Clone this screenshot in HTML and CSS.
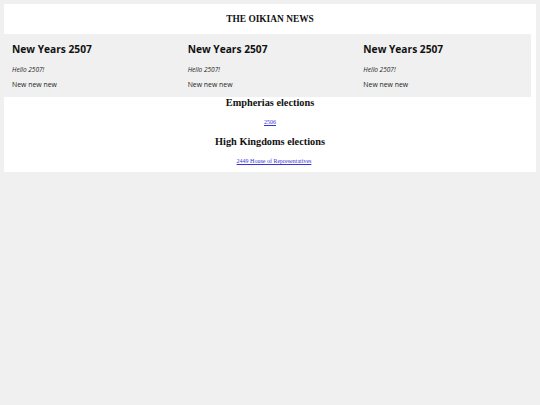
FILE: index.html
```html
<!DOCTYPE html>
<html lang="en">
<head>
<meta charset="utf-8">
<title>The Oikian News</title>
<link rel="stylesheet" href="styles.css">
</head>
<body>
<div class="page">
  <header class="masthead">
    <h1 class="masthead-title">THE OIKIAN NEWS</h1>
  </header>
  <section class="news-band">
    <article class="news-item">
      <h2 class="news-title">New Years 2507</h2>
      <p class="news-lead">Hello 2507!</p>
      <p class="news-body">New new new</p>
    </article>
    <article class="news-item">
      <h2 class="news-title">New Years 2507</h2>
      <p class="news-lead">Hello 2507!</p>
      <p class="news-body">New new new</p>
    </article>
    <article class="news-item">
      <h2 class="news-title">New Years 2507</h2>
      <p class="news-lead">Hello 2507!</p>
      <p class="news-body">New new new</p>
    </article>
  </section>
  <section class="elections">
    <h3 class="elections-title">Empherias elections</h3>
    <a class="elections-link" href="#">2506</a>
    <h3 class="elections-title elections-title--gap">High Kingdoms elections</h3>
    <a class="elections-link elections-link--indent" href="#">2449 House of Representatives</a>
  </section>
</div>
</body>
</html>
```

FILE: styles.css
```css
html, body {
  margin: 0;
  padding: 0;
}

body {
  background: #f0f0f0;
  padding: 4px;
  font-family: "Open Sans", "Liberation Sans", sans-serif;
  color: #111;
}

.page {
  background: #fff;
  padding-bottom: 7px;
}

.masthead {
  height: 30px;
  display: flex;
  align-items: center;
  justify-content: center;
}

.masthead-title {
  margin: 0;
  font-family: "Liberation Serif", serif;
  font-weight: bold;
  font-size: 9.4px;
  line-height: 12px;
  color: #111;
}

.news-band {
  background: #f0f0f0;
  margin-right: 5px;
  display: grid;
  grid-template-columns: repeat(3, 1fr);
  padding: 8px 0 7px;
}

.news-item {
  padding-left: 8px;
}

.news-title {
  margin: 0;
  font-size: 10.2px;
  font-weight: 700;
  line-height: 14px;
  color: #111;
}

.news-lead {
  margin: 8.5px 0 0;
  font-style: italic;
  font-size: 6.5px;
  line-height: 9px;
  color: #222;
}

.news-body {
  margin: 6.5px 0 0;
  font-size: 6.9px;
  line-height: 10px;
  color: #222;
}

.elections {
  display: flex;
  flex-direction: column;
  align-items: center;
}

.elections-title {
  margin: 0;
  font-family: "Liberation Serif", serif;
  font-weight: bold;
  font-size: 10.3px;
  line-height: 12px;
  color: #111;
}

.elections-title--gap {
  margin-top: 10px;
}

.elections-link {
  margin-top: 9px;
  font-family: "Liberation Serif", serif;
  font-size: 6px;
  line-height: 8px;
  color: #3434d8;
}

.elections-link--indent {
  margin-left: 8px;
}
```
